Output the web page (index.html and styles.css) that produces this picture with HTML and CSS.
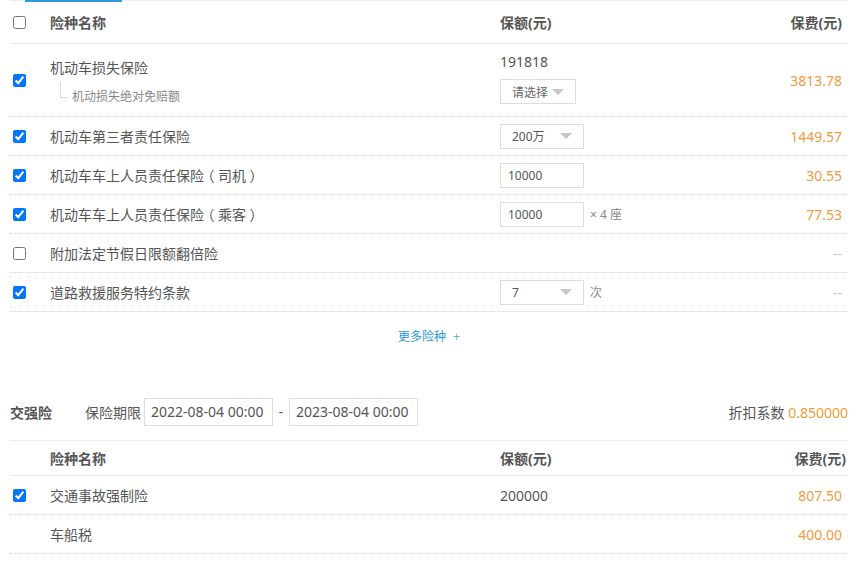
FILE: index.html
```html
<!DOCTYPE html>
<html lang="zh-CN">
<head>
    <meta charset="UTF-8">
    <meta name="viewport" content="width=device-width, initial-scale=1.0">
    <title>险种选择</title>
    <link rel="stylesheet" href="styles.css">
</head>
<body>
<div class="panel">
    <!-- tab indicator -->
    <div class="tab-line"><div class="tab-active"></div></div>

    <!-- commercial insurance -->
    <div class="row head">
        <div class="col-check"><input type="checkbox"></div>
        <div class="col-name">险种名称</div>
        <div class="col-amount">保额(元)</div>
        <div class="col-fee">保费(元)</div>
    </div>

    <div class="row item tall">
        <div class="col-check"><input type="checkbox" checked></div>
        <div class="col-name">
            <div class="name-main">机动车损失保险</div>
            <div class="name-sub"><span class="branch"></span>机动损失绝对免赔额</div>
        </div>
        <div class="col-amount stack">
            <div class="amount-num">191818</div>
            <div class="select small"><span>请选择</span><i class="caret"></i></div>
        </div>
        <div class="col-fee price">3813.78</div>
    </div>

    <div class="row item">
        <div class="col-check"><input type="checkbox" checked></div>
        <div class="col-name">机动车第三者责任保险</div>
        <div class="col-amount"><div class="select"><span>200万</span><i class="caret"></i></div></div>
        <div class="col-fee price">1449.57</div>
    </div>

    <div class="row item">
        <div class="col-check"><input type="checkbox" checked></div>
        <div class="col-name">机动车车上人员责任保险<span class="paren">（</span>司机<span class="paren">）</span></div>
        <div class="col-amount"><input class="text-input" type="text" value="10000"></div>
        <div class="col-fee price">30.55</div>
    </div>

    <div class="row item">
        <div class="col-check"><input type="checkbox" checked></div>
        <div class="col-name">机动车车上人员责任保险<span class="paren">（</span>乘客<span class="paren">）</span></div>
        <div class="col-amount"><input class="text-input" type="text" value="10000"><span class="unit">× 4 座</span></div>
        <div class="col-fee price">77.53</div>
    </div>

    <div class="row item">
        <div class="col-check"><input type="checkbox"></div>
        <div class="col-name">附加法定节假日限额翻倍险</div>
        <div class="col-amount"></div>
        <div class="col-fee empty">--</div>
    </div>

    <div class="row item">
        <div class="col-check"><input type="checkbox" checked></div>
        <div class="col-name">道路救援服务特约条款</div>
        <div class="col-amount"><div class="select"><span>7</span><i class="caret"></i></div><span class="unit">次</span></div>
        <div class="col-fee empty">--</div>
    </div>

    <div class="more"><a href="#">更多险种</a><span class="plus">+</span></div>

    <!-- compulsory insurance -->
    <div class="jq-bar">
        <span class="jq-title">交强险</span>
        <span class="jq-label">保险期限</span>
        <input class="date-input" type="text" value="2022-08-04 00:00">
        <span class="dash">-</span>
        <input class="date-input" type="text" value="2023-08-04 00:00">
        <span class="discount">折扣系数 <em>0.850000</em></span>
    </div>

    <div class="row head short">
        <div class="col-check"></div>
        <div class="col-name">险种名称</div>
        <div class="col-amount">保额(元)</div>
        <div class="col-fee wide">保费(元)</div>
    </div>

    <div class="row item">
        <div class="col-check"><input type="checkbox" checked></div>
        <div class="col-name">交通事故强制险</div>
        <div class="col-amount">200000</div>
        <div class="col-fee price">807.50</div>
    </div>

    <div class="row item">
        <div class="col-check"></div>
        <div class="col-name">车船税</div>
        <div class="col-amount"></div>
        <div class="col-fee price">400.00</div>
    </div>
</div>
</body>
</html>
```

FILE: styles.css
```css
/* page */
body {
    margin: 0;
    background: #fff;
    font-family: "Noto Sans", "Noto Sans CJK SC", sans-serif;
    font-size: 14px;
    color: #555;
}

.panel {
    margin: 0 17px 0 10px;
}

/* tab indicator on top */
.tab-line {
    height: 1px;
    background: #eee;
}

.tab-active {
    margin-left: 15px;
    width: 97px;
    height: 2px;
    background: #2d9ae0;
}

/* rows */
.row {
    display: grid;
    grid-template-columns: 40px 450px 1fr auto;
    align-items: center;
    box-sizing: border-box;
    height: 39px;
    padding-right: 6px;
    border-bottom: 1px dotted #d8d8d8;
}

.row.head {
    height: 43px;
    font-weight: bold;
    border-bottom: 1px solid #e8e8e8;
}

.row.head.short {
    height: 35px;
}

.row.tall {
    height: 73px;
}

.col-check input {
    display: block;
    margin: 0 0 0 3px;
    width: 13px;
    height: 13px;
}

/* full width brackets, glyph centred in its box */
.paren {
    display: inline-block;
    width: 14px;
    text-align: center;
    font-feature-settings: "halt";
}

.col-fee {
    text-align: right;
}

.col-fee.wide {
    margin-right: -4px;
}

.price {
    color: #f39b3c;
}

.empty {
    color: #c8c8c8;
}

.col-amount {
    display: flex;
    align-items: center;
}

/* first row with sub item */
.name-main {
    line-height: 20px;
    margin-top: 3px;
}

.name-sub {
    display: flex;
    align-items: flex-end;
    margin-top: 4px;
    font-size: 12px;
    color: #888;
    line-height: 16px;
}

.branch {
    display: inline-block;
    width: 7px;
    height: 15px;
    margin: 0 4px 7px 10px;
    border-left: 1px solid #ddd;
    border-bottom: 1px solid #ddd;
}

.stack {
    flex-direction: column;
    align-items: flex-start;
}

.amount-num {
    line-height: 20px;
    margin-top: -4px;
    margin-bottom: 7px;
}

/* form controls */
.select {
    display: flex;
    align-items: center;
    justify-content: space-between;
    box-sizing: border-box;
    width: 84px;
    height: 25px;
    padding: 0 11px 0 11px;
    border: 1px solid #ddd;
    font-size: 12px;
    color: #555;
}

.select.small {
    width: 76px;
    padding: 0 11px 0 11px;
    color: #666;
}

.caret {
    width: 0;
    height: 0;
    border-left: 6px solid transparent;
    border-right: 6px solid transparent;
    border-top: 6px solid #c6c6c6;
}

.text-input {
    box-sizing: border-box;
    width: 84px;
    height: 25px;
    padding: 0 7px;
    border: 1px solid #ddd;
    font-family: "Noto Sans", sans-serif;
    font-size: 12px;
    color: #555;
    outline: none;
}

.unit {
    margin-left: 6px;
    font-size: 12px;
    color: #888;
}

/* more link */
.more {
    display: flex;
    justify-content: center;
    align-items: center;
    height: 48px;
    font-size: 12px;
}

.more a {
    color: #2a9ae0;
    text-decoration: none;
}

.plus {
    margin-left: 7px;
    color: #6aa8d8;
}

/* compulsory insurance bar */
.jq-bar {
    display: flex;
    align-items: center;
    box-sizing: border-box;
    height: 58px;
    margin-top: 23px;
    border-bottom: 1px solid #eee;
}

.jq-title {
    font-weight: bold;
    width: 75px;
}

.jq-label {
    margin-right: 3px;
}

.date-input {
    box-sizing: border-box;
    width: 129px;
    height: 28px;
    padding: 0 6px;
    border: 1px solid #ddd;
    font-family: "Noto Sans", sans-serif;
    font-size: 14px;
    color: #555;
    outline: none;
}

.dash {
    width: 16px;
    text-align: center;
}

.discount {
    margin-left: auto;
}

.discount em {
    font-style: normal;
    color: #f39b3c;
}
```
